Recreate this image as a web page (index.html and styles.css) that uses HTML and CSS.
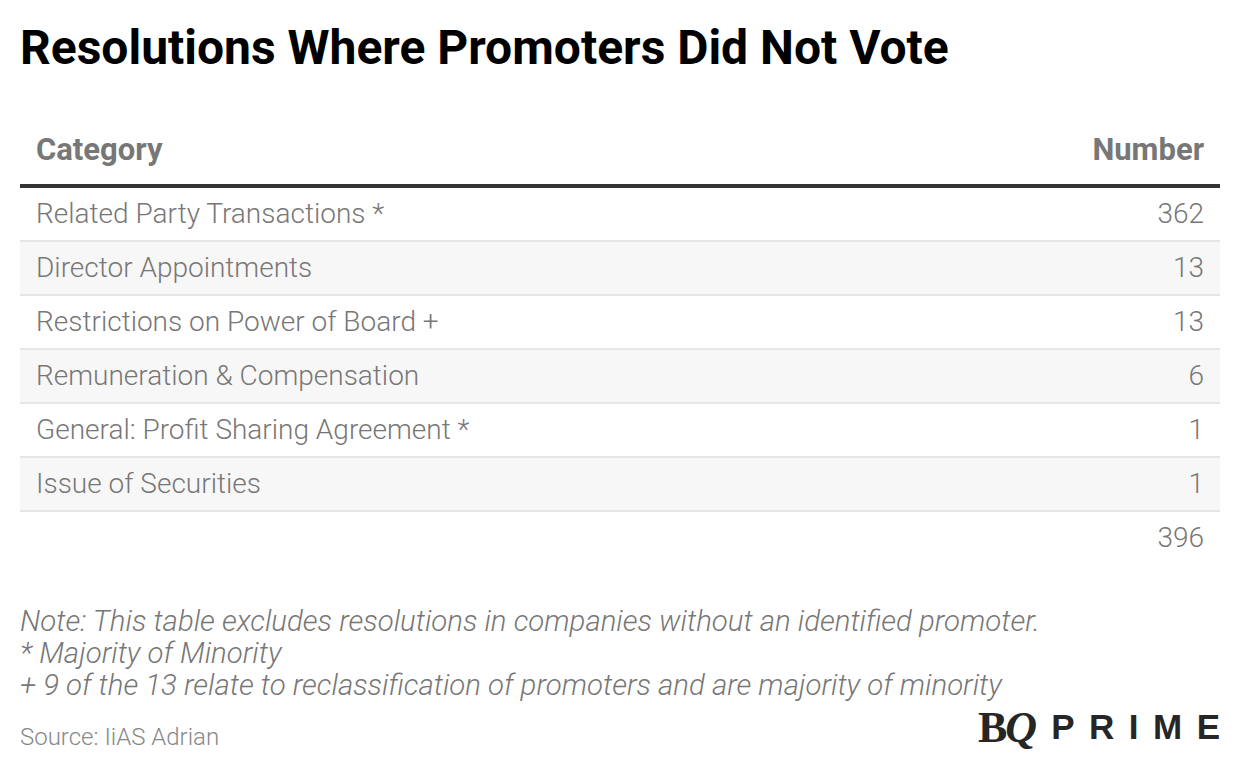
FILE: index.html
```html
<!DOCTYPE html>
<html>
<head>
<meta charset="utf-8">
<link rel="stylesheet" href="styles.css">
</head>
<body>
<div class="chart">
  <h1 class="title">Resolutions Where Promoters Did Not Vote</h1>
  <table class="data">
    <thead>
      <tr><th class="cat">Category</th><th class="num">Number</th></tr>
    </thead>
    <tbody>
      <tr><td class="cat">Related Party Transactions *</td><td class="num">362</td></tr>
      <tr class="alt"><td class="cat">Director Appointments</td><td class="num">13</td></tr>
      <tr><td class="cat">Restrictions on Power of Board +</td><td class="num">13</td></tr>
      <tr class="alt"><td class="cat">Remuneration &amp; Compensation</td><td class="num">6</td></tr>
      <tr><td class="cat">General: Profit Sharing Agreement *</td><td class="num">1</td></tr>
      <tr class="alt"><td class="cat">Issue of Securities</td><td class="num">1</td></tr>
    </tbody>
    <tfoot>
      <tr><td class="cat"></td><td class="num">396</td></tr>
    </tfoot>
  </table>
  <div class="notes">
    <p>Note: This table excludes resolutions in companies without an identified promoter.</p>
    <p>* Majority of Minority</p>
    <p>+ 9 of the 13 relate to reclassification of promoters and are majority of minority</p>
  </div>
  <div class="footer">
    <span class="source">Source: IiAS Adrian</span>
    <span class="logo"><span class="bq"><span class="b">B</span><span class="q">Q</span></span><span class="prime">PRIME</span></span>
  </div>
</div>
</body>
</html>
```
FILE: styles.css
```css
html, body {
  margin: 0;
  padding: 0;
  background: #fff;
}
.chart {
  width: 1200px;
  padding: 20px 20px 0 20px;
  font-family: Roboto, "Liberation Sans", sans-serif;
}
.title {
  margin: 0;
  font-size: 48px;
  font-weight: 700;
  color: #000;
  line-height: 56px;
}
.data {
  width: 100%;
  border-collapse: collapse;
  margin-top: 58px;
}
.data th {
  font-size: 31px;
  font-weight: 700;
  color: #777;
  padding: 0 16px 18px 16px;
  border-bottom: 4px solid #333;
  line-height: 32px;
}
.data td {
  font-size: 28px;
  font-weight: 300;
  color: #777;
  padding: 0 16px;
  height: 52px;
  border-bottom: 2px solid #e6e6e6;
  line-height: 32px;
}
.data tfoot td {
  border-bottom: none;
}
.data .cat { text-align: left; }
.data .num { text-align: right; }
.data tr.alt td { background: #f7f7f7; }
.notes {
  margin-top: 41px;
  font-size: 29.4px;
  font-style: italic;
  font-weight: 300;
  color: #777;
  line-height: 32px;
}
.notes p { margin: 0; }
.footer {
  display: flex;
  justify-content: space-between;
  align-items: flex-start;
  margin-top: 8px;
}
.source {
  margin-top: 16px;
  font-size: 24px;
  line-height: 24px;
  font-weight: 300;
  color: #888;
}
.logo {
  line-height: 36px;
  color: #262626;
  white-space: nowrap;
}
.bq {
  font-family: "Liberation Serif", serif;
  font-weight: 700;
  font-size: 44px;
  letter-spacing: -2px;
}
.bq .q { font-style: italic; }
.prime {
  font-family: "Liberation Sans", sans-serif;
  font-weight: 700;
  font-size: 35px;
  letter-spacing: 14.5px;
  margin-left: 16px;
  margin-right: -14.5px;
  vertical-align: 3px;
}
```
